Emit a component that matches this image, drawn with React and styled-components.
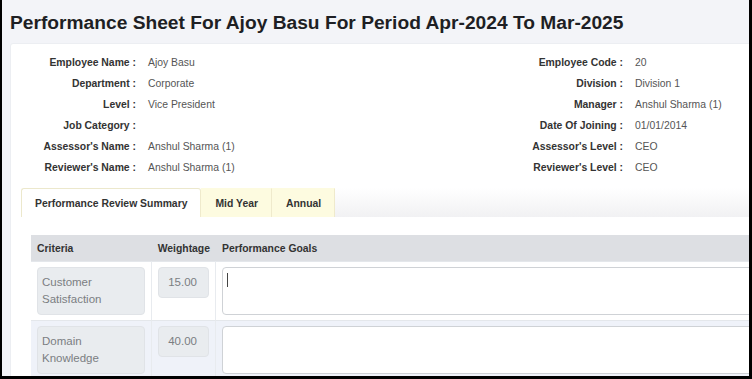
import React from "react";
import styled, { createGlobalStyle } from "styled-components";

const Global = createGlobalStyle`
  html, body { margin: 0; padding: 0; background: #000; }
  body { font-family: "Liberation Sans", Arial, sans-serif; overflow: hidden; }
  * { box-sizing: border-box; }
`;

const Frame = styled.div`
  width: 752px;
  height: 379px;
  border-left: 2px solid #000;
  border-right: 3px solid #000;
  border-bottom: 3px solid #000;
  overflow: hidden;
  background: #f3f4f8;
`;

const Page = styled.div`
  width: 1000px;
  padding: 0 0 0 8px;
`;

const Title = styled.h1`
  margin: 0;
  height: 43px;
  display: flex;
  align-items: center;
  padding-top: 2px;
  font-size: 19.2px;
  font-weight: bold;
  color: #1e1f24;
`;

const Card = styled.div`
  background: #fff;
  border: 1px solid #eceef2;
  border-radius: 3px;
  padding: 8px 0 0 10px;
  min-height: 400px;
`;

const InfoGrid = styled.div`
  display: grid;
  grid-template-columns: 120px 343px 120px 1fr;
  column-gap: 12px;
  margin-left: -5px;
  font-size: 10.4px;
`;

const Label = styled.div`
  height: 21px;
  line-height: 21px;
  text-align: right;
  font-weight: bold;
  color: #333;
  white-space: nowrap;
`;

const Value = styled.div`
  height: 21px;
  line-height: 21px;
  color: #555;
  white-space: nowrap;
`;

const TabBar = styled.div`
  margin-top: 10px;
  display: flex;
  height: 29px;
  background: linear-gradient(#ffffff, #f1f1f3);
`;

const Tab = styled.div`
  display: flex;
  align-items: center;
  padding: 0 13px;
  font-size: 10.4px;
  font-weight: bold;
  color: #333;
  white-space: nowrap;
  background: ${(p) => (p.$active ? "#ffffff" : "#fdfbe0")};
  border: 1px solid ${(p) => (p.$active ? "#ece8cc" : "#fdfbe0")};
  border-bottom: none;
  border-right: 1px solid #efeacc;
  border-radius: ${(p) => (p.$active ? "3px 3px 0 0" : "0")};
`;

const TabContent = styled.div`
  padding: 18px 0 0 10px;
`;

const Table = styled.div`
  display: grid;
  grid-template-columns: 121px 64px 1fr;
  font-size: 10.4px;
`;

const HeadCell = styled.div`
  height: 26px;
  display: flex;
  align-items: center;
  justify-content: ${(p) => (p.$right ? "flex-end" : "flex-start")};
  padding: 0 6px;
  background: #dddfe3;
  font-weight: bold;
  color: #333;
  white-space: nowrap;
`;

const Cell = styled.div`
  padding: 5px 6px 5px 6px;
  border-top: 1px solid #e4e7eb;
  border-right: ${(p) => (p.$last ? "none" : "1px solid #e8ebef")};
  background: ${(p) => (p.$striped ? "#eff2f9" : "#ffffff")};
`;

const ReadBox = styled.div`
  background: #e9ecef;
  border: 1px solid #e0e3e7;
  border-radius: 4px;
  padding: ${(p) => (p.$right ? "6px 11px 6px 4px" : "6px 4px")};
  font-size: 11.5px;
  line-height: 17px;
  color: #7b7e82;
  text-align: ${(p) => (p.$right ? "right" : "left")};
`;

const GoalBox = styled.div`
  height: 48px;
  background: #fff;
  border: 1px solid #cfd2d6;
  border-radius: 4px;
  padding: 5px 4px;
`;

const Caret = styled.span`
  display: block;
  width: 1px;
  height: 14px;
  background: #444;
`;

const leftInfo = [
  ["Employee Name :", "Ajoy Basu"],
  ["Department :", "Corporate"],
  ["Level :", "Vice President"],
  ["Job Category :", ""],
  ["Assessor's Name :", "Anshul Sharma (1)"],
  ["Reviewer's Name :", "Anshul Sharma (1)"],
];
const rightInfo = [
  ["Employee Code :", "20"],
  ["Division :", "Division 1"],
  ["Manager :", "Anshul Sharma (1)"],
  ["Date Of Joining :", "01/01/2014"],
  ["Assessor's Level :", "CEO"],
  ["Reviewer's Level :", "CEO"],
];

const rows = [
  { criteria: ["Customer", "Satisfaction"], weight: "15.00", focused: true },
  { criteria: ["Domain", "Knowledge"], weight: "40.00", focused: false },
];

export default function App() {
  return (
    <>
      <Global />
      <Frame>
        <Page>
          <Title>Performance Sheet For Ajoy Basu For Period Apr-2024 To Mar-2025</Title>
          <Card>
            <InfoGrid>
              {leftInfo.map((l, i) => (
                <React.Fragment key={i}>
                  <Label>{l[0]}</Label>
                  <Value>{l[1]}</Value>
                  <Label>{rightInfo[i][0]}</Label>
                  <Value>{rightInfo[i][1]}</Value>
                </React.Fragment>
              ))}
            </InfoGrid>
            <TabBar>
              <Tab $active>Performance Review Summary</Tab>
              <Tab>Mid Year</Tab>
              <Tab>Annual</Tab>
            </TabBar>
            <TabContent>
              <Table>
                <HeadCell>Criteria</HeadCell>
                <HeadCell $right>Weightage</HeadCell>
                <HeadCell>Performance Goals</HeadCell>
                {rows.map((r, i) => (
                  <React.Fragment key={i}>
                    <Cell $striped={i % 2 === 1}>
                      <ReadBox>
                        {r.criteria[0]}
                        <br />
                        {r.criteria[1]}
                      </ReadBox>
                    </Cell>
                    <Cell $striped={i % 2 === 1}>
                      <ReadBox $right>{r.weight}</ReadBox>
                    </Cell>
                    <Cell $striped={i % 2 === 1} $last>
                      <GoalBox>{r.focused && <Caret />}</GoalBox>
                    </Cell>
                  </React.Fragment>
                ))}
              </Table>
            </TabContent>
          </Card>
        </Page>
      </Frame>
    </>
  );
}
